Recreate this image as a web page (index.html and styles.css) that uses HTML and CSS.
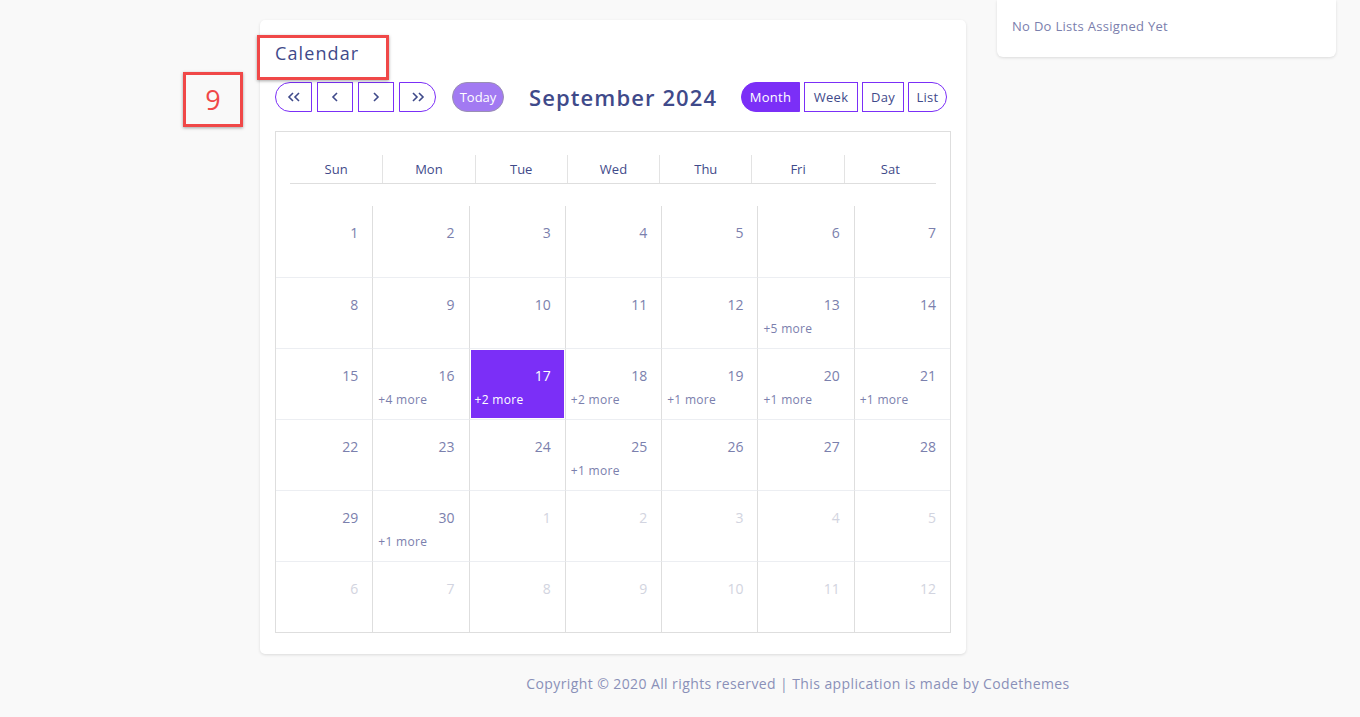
FILE: index.html
```html
<!DOCTYPE html>
<html lang="en">
  <head>
    <meta charset="UTF-8" />
    <meta name="viewport" content="width=device-width, initial-scale=1.0" />
    <title>Calendar</title>
    <link rel="stylesheet" href="styles.css">
  </head>
  <body>
    <div class="mark mark-num">9</div>

    <div class="page">
      <div class="cols">
        <div class="card cal-card">
          <h4 class="card-title"><span class="mark mark-title"></span>Calendar</h4>

          <div class="toolbar">
            <div class="btn-group">
              <button class="btn btn-first" type="button">
                <svg width="14" height="12" viewBox="0 0 14 12"><polyline points="6,2 2,6 6,10" /><polyline points="12,2 8,6 12,10" /></svg>
              </button>
              <button class="btn" type="button">
                <svg width="10" height="12" viewBox="0 0 10 12"><polyline points="7,2 3,6 7,10" /></svg>
              </button>
              <button class="btn" type="button">
                <svg width="10" height="12" viewBox="0 0 10 12"><polyline points="3,2 7,6 3,10" /></svg>
              </button>
              <button class="btn btn-last" type="button">
                <svg width="14" height="12" viewBox="0 0 14 12"><polyline points="2,2 6,6 2,10" /><polyline points="8,2 12,6 8,10" /></svg>
              </button>
            </div>
            <button class="btn-today" type="button">Today</button>
            <h2 class="cal-title">September 2024</h2>
            <div class="btn-group views">
              <button class="btn btn-first active btn-month" type="button">Month</button>
              <button class="btn btn-week" type="button">Week</button>
              <button class="btn btn-day" type="button">Day</button>
              <button class="btn btn-last" type="button">List</button>
            </div>
          </div>

          <div class="cal">
            <div class="cal-head">
              <div>Sun</div><div>Mon</div><div>Tue</div><div>Wed</div><div>Thu</div><div>Fri</div><div>Sat</div>
            </div>
            <div class="cal-body" id="cal-body"></div>
          </div>
        </div>

        <div class="card todo-card">
          <p>No Do Lists Assigned Yet</p>
        </div>
      </div>

      <footer class="footer">Copyright © 2020 All rights reserved | This application is made by Codethemes</footer>
    </div>

    <script>
      // extra events per day
      const more = { 13: 5, 16: 4, 17: 2, 18: 2, 19: 1, 20: 1, 21: 1, 25: 1, 30: 1 };
      const body = document.getElementById("cal-body");

      for (let i = 0; i < 42; i++) {
        let day = i + 1;
        let other = false;
        if (day > 30) {
          day = day - 30;
          other = true;
        }
        const cell = document.createElement("div");
        cell.className = "day";
        if (other) cell.classList.add("other");
        if (!other && day === 17) cell.classList.add("today");

        const num = document.createElement("div");
        num.className = "num";
        num.textContent = day;
        cell.appendChild(num);

        if (!other && more[day]) {
          const m = document.createElement("div");
          m.className = "more";
          m.textContent = "+" + more[day] + " more";
          cell.appendChild(m);
        }
        body.appendChild(cell);
      }
    </script>
  </body>
</html>
```

FILE: styles.css
```css
body {
  margin: 0;
  background: #f9f9f9;
  font-family: "Open Sans", "Noto Sans", sans-serif;
  color: #3f4a8a;
}

.page {
  padding-left: 260px;
  padding-right: 24px;
}

.cols {
  display: flex;
  align-items: flex-start;
  gap: 31px;
}

.card {
  background: #fff;
  border-radius: 5px;
  box-shadow: 0 1px 3px rgba(0, 0, 0, 0.12);
}

.cal-card {
  width: 706px;
  margin-top: 20px;
  padding: 20px 15px 21px;
  box-sizing: border-box;
}

.todo-card {
  flex: 1;
  height: 57px;
  border-radius: 0 0 6px 6px;
  box-sizing: border-box;
  padding-top: 17px;
}

.todo-card p {
  margin: 0 0 0 15px;
  font-size: 13px;
  letter-spacing: 0.3px;
  color: #7b80ad;
}

.card-title {
  position: relative;
  margin: 0;
  font-size: 18px;
  font-weight: 400;
  line-height: 27px;
  letter-spacing: 1.1px;
  color: #3f4a8a;
}

/* red annotation boxes */
.mark {
  position: absolute;
  border: 3px solid #f04848;
  box-shadow: 0 1px 3px rgba(0, 0, 0, 0.35);
  box-sizing: border-box;
}

.mark-title {
  left: -18px;
  top: -5px;
  width: 132px;
  height: 45px;
}

.mark-num {
  left: 183px;
  top: 72px;
  width: 60px;
  height: 55px;
  color: #f04848;
  font-size: 27px;
  text-align: center;
  line-height: 49px;
}

.toolbar {
  display: flex;
  align-items: center;
  margin-top: 15px;
  height: 30px;
}

.btn-group {
  display: flex;
  gap: 5px;
}

.btn {
  height: 30px;
  padding: 0 8px;
  width: 36px;
  background: #fff;
  border: 1px solid #7b2ff7;
  border-radius: 0;
  color: #3f4a8a;
  font-family: inherit;
  font-size: 13px;
  display: flex;
  align-items: center;
  justify-content: center;
  box-sizing: border-box;
}

.btn svg {
  fill: none;
  stroke: #3f4a8a;
  stroke-width: 1.6;
}

.btn-first {
  border-radius: 15px 0 0 15px;
  width: 37px;
}

.btn-last {
  border-radius: 0 15px 15px 0;
  width: 37px;
}

.btn-today {
  margin-left: 16px;
  height: 30px;
  width: 52px;
  border-radius: 15px;
  background: #a27af2;
  border: 1px solid #9a8fb3;
  color: #fff;
  font-family: inherit;
  font-size: 13px;
  padding: 0;
}

.cal-title {
  margin: 0 0 0 25px;
  font-size: 22px;
  font-weight: 600;
  color: #3f4a8a;
  letter-spacing: 1.1px;
}

.views {
  margin-left: auto;
  margin-right: 4px;
  gap: 4px;
}

.views .btn {
  padding: 0;
  letter-spacing: 0.3px;
}

.views .btn-month {
  width: 59px;
}

.views .btn-week {
  width: 54px;
}

.views .btn-day {
  width: 42px;
}

.views .btn-last {
  width: 39px;
}

.views .active {
  background: #7b2ff7;
  color: #fff;
}

.cal {
  margin-top: 19px;
  border: 1px solid #dedede;
}

.cal-head {
  display: grid;
  grid-template-columns: repeat(7, 1fr);
  margin: 23px 14px 22px;
  border-bottom: 1px solid #dedede;
}

.cal-head div {
  height: 28px;
  line-height: 28px;
  text-align: center;
  font-size: 13px;
  border-left: 1px solid #e3e3e3;
}

.cal-head div:first-child {
  border-left: none;
}

.cal-body {
  display: grid;
  grid-template-columns: repeat(7, 1fr);
  grid-auto-rows: 71px;
}

.day {
  border-left: 1px solid #dedede;
  border-top: 1px solid #eceef2;
  padding: 1px;
}

.day:nth-child(7n+1) {
  border-left: none;
}

.day:nth-child(-n+7) {
  border-top: none;
}

.num {
  text-align: right;
  padding: 16px 13px 0 0;
  font-size: 14px;
  line-height: 20px;
  color: #7b80ad;
}

.more {
  padding: 6px 0 0 4px;
  font-size: 12px;
  line-height: 16px;
  letter-spacing: 0.3px;
  color: #7b80ad;
}

.other .num {
  color: #d2d4e0;
}

.today {
  background: #7b2ff7;
  background-clip: content-box;
}

.today .num,
.today .more {
  color: #fff;
}

.footer {
  text-align: center;
  margin-top: 20px;
  font-size: 14px;
  letter-spacing: 0.4px;
  color: #8a90b8;
}
```
